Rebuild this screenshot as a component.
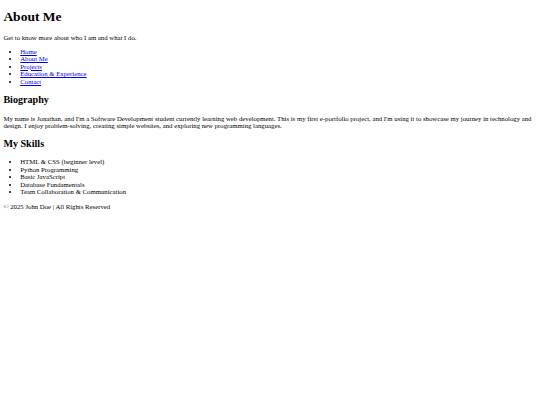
const navLinks = ["Home", "About Me", "Projects", "Education & Experience", "Contact"];

const skills = [
  "HTML & CSS (beginner level)",
  "Python Programming",
  "Basic JavaScript",
  "Database Fundamentals",
  "Team Collaboration & Communication",
];

export default function App() {
  return (
    <div className="w-full px-[3.375px] text-black text-[6.75px] leading-[7.5px] font-['Liberation_Serif','Times_New_Roman',serif]">
      <header>
        <h1 className="text-[13.5px] leading-[1.15] font-bold my-[9.05px]">About Me</h1>
        <p className="my-[6.75px]">Get to know more about who I am and what I do.</p>
        <nav>
          <ul className="list-disc pl-[16.875px] my-[6.75px]">
            {navLinks.map((l) => (
              <li key={l}>
                <a href="#" className="text-[#0000ee] underline">
                  {l}
                </a>
              </li>
            ))}
          </ul>
        </nav>
      </header>

      <section>
        <h2 className="text-[10.125px] leading-[12px] font-bold mt-[8.8px] mb-[8.4px]">Biography</h2>
        <p className="my-[6.75px]">
          My name is Jonathan, and I'm a Software Development student currently learning web
          development. This is my first e-portfolio project, and I'm using it to showcase my
          journey in technology and design. I enjoy problem-solving, creating simple websites,
          and exploring new programming languages.
        </p>
      </section>

      <section>
        <h2 className="text-[10.125px] leading-[12px] font-bold my-[8.4px]">My Skills</h2>
        <ul className="list-disc pl-[16.875px] my-[6.75px]">
          {skills.map((s) => (
            <li key={s}>{s}</li>
          ))}
        </ul>
      </section>

      <footer>
        <p className="my-[6.75px]">© 2025 John Doe | All Rights Reserved</p>
      </footer>
    </div>
  );
}
